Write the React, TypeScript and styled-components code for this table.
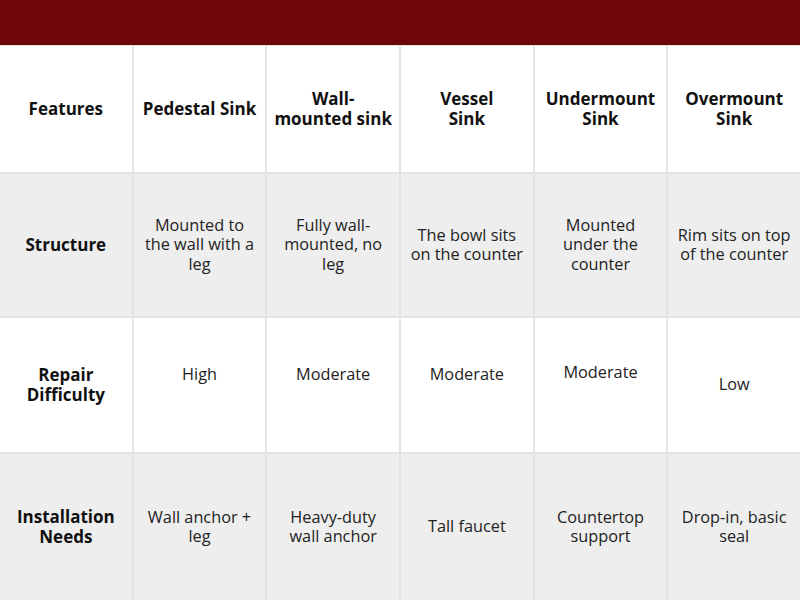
import styled, { createGlobalStyle } from "styled-components";

const GlobalStyle = createGlobalStyle`
  html, body {
    margin: 0;
    padding: 0;
    background: #ffffff;
  }
  body {
    font-family: "Open Sans", "Noto Sans", sans-serif;
  }
`;

const Page = styled.div`
  width: 800px;
  height: 600px;
  display: flex;
  flex-direction: column;
  overflow: hidden;
`;

const Banner = styled.div`
  height: 45px;
  background: #6e050b;
  flex-shrink: 0;
`;

const Table = styled.div`
  flex: 1;
  display: grid;
  grid-template-columns: repeat(6, 1fr);
  grid-template-rows: 126px 142px 134px 1fr;
  gap: 2px;
  background: #e4e4e4;
  padding-top: 1px;
`;

const Cell = styled.div<{ $shade?: boolean; $head?: boolean; $lift?: number }>`
  display: flex;
  align-items: center;
  justify-content: center;
  text-align: center;
  padding-bottom: ${(p) => (p.$lift ? p.$lift * 2 : 0)}px;
  background: ${(p) => (p.$shade ? "#eeeeee" : "#ffffff")};
  color: ${(p) => (p.$head ? "#111111" : "#222222")};
  font-size: ${(p) => (p.$head ? 17 : 16.3)}px;
  line-height: ${(p) => (p.$head ? 20 : 19.5)}px;
  font-weight: ${(p) => (p.$head ? 700 : 400)};
`;

type Row = { label: string; cells: string[]; lift?: number[] };

const headers = [
  "Features",
  "Pedestal Sink",
  "Wall-\nmounted sink",
  "Vessel\nSink",
  "Undermount\nSink",
  "Overmount\nSink",
];

const rows: Row[] = [
  {
    label: "Structure",
    cells: [
      "Mounted to\nthe wall with a\nleg",
      "Fully wall-\nmounted, no\nleg",
      "The bowl sits\non the counter",
      "Mounted\nunder the\ncounter",
      "Rim sits on top\nof the counter",
    ],
  },
  {
    label: "Repair\nDifficulty",
    cells: ["High", "Moderate", "Moderate", "Moderate", "Low"],
    lift: [10, 10, 10, 12, 0],
  },
  {
    label: "Installation\nNeeds",
    cells: [
      "Wall anchor +\nleg",
      "Heavy-duty\nwall anchor",
      "Tall faucet",
      "Countertop\nsupport",
      "Drop-in, basic\nseal",
    ],
  },
];

// line breaks follow the reference exactly, so no automatic wrapping
const Text = styled.span`
  white-space: pre;
`;

export default function App() {
  return (
    <Page>
      <GlobalStyle />
      <Banner />
      <Table>
        {headers.map((h) => (
          <Cell key={h} $head>
            <Text>{h}</Text>
          </Cell>
        ))}
        {rows.map((row, i) => {
          const shade = i % 2 === 0;
          return [
            <Cell key={row.label} $head $shade={shade}>
              <Text>{row.label}</Text>
            </Cell>,
            ...row.cells.map((c, j) => (
              <Cell key={row.label + j} $shade={shade} $lift={row.lift?.[j]}>
                <Text>{c}</Text>
              </Cell>
            )),
          ];
        })}
      </Table>
    </Page>
  );
}
